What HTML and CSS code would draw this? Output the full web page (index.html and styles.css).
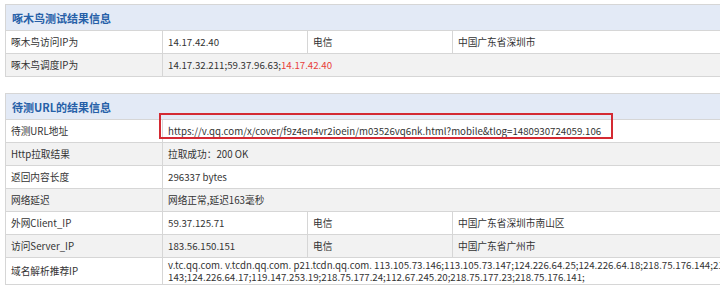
FILE: index.html
```html
<!DOCTYPE html>
<html>
<head>
<meta charset="utf-8">
<link rel="stylesheet" href="styles.css">
</head>
<body>
<div class="page">
  <table class="info">
    <colgroup><col class="c1"><col class="c2"><col class="c3"><col class="c4"></colgroup>
    <tr class="head"><th colspan="4">啄木鸟测试结果信息</th></tr>
    <tr><td>啄木鸟访问IP为</td><td>14.17.42.40</td><td>电信</td><td>中国广东省深圳市</td></tr>
    <tr class="alt"><td>啄木鸟调度IP为</td><td colspan="3">14.17.32.211;59.37.96.63;<span class="red">14.17.42.40</span></td></tr>
  </table>

  <table class="info">
    <colgroup><col class="c1"><col class="c2"><col class="c3"><col class="c4"></colgroup>
    <tr class="head"><th colspan="4">待测URL的结果信息</th></tr>
    <tr><td>待测URL地址</td><td colspan="3"><span class="hl">https://v.qq.com/x/cover/f9z4en4vr2ioein/m03526vq6nk.html?mobile&amp;tlog=1480930724059.106</span></td></tr>
    <tr class="alt"><td>Http拉取结果</td><td colspan="3">拉取成功：200 OK</td></tr>
    <tr><td>返回内容长度</td><td colspan="3">296337 bytes</td></tr>
    <tr class="alt"><td>网络延迟</td><td colspan="3">网络正常,延迟163毫秒</td></tr>
    <tr><td>外网Client_IP</td><td>59.37.125.71</td><td>电信</td><td>中国广东省深圳市南山区</td></tr>
    <tr class="alt"><td>访问Server_IP</td><td>183.56.150.151</td><td>电信</td><td>中国广东省广州市</td></tr>
    <tr class="tall"><td>域名解析推荐IP</td><td colspan="3" class="multi">v.tc.qq.com. v.tcdn.qq.com. p21.tcdn.qq.com. 113.105.73.146;113.105.73.147;124.226.64.25;124.226.64.18;218.75.176.144;218.75.176.<br>143;124.226.64.17;119.147.253.19;218.75.177.24;112.67.245.20;218.75.177.23;218.75.176.141;</td></tr>
  </table>

  <table class="info">
    <colgroup><col class="c1"><col class="c2"><col class="c3"><col class="c4"></colgroup>
    <tr class="head"><th colspan="4">&nbsp;</th></tr>
  </table>
</div>
</body>
</html>
```
FILE: styles.css
```css
html, body {
  margin: 0;
  padding: 0;
  background: #ffffff;
  overflow: hidden;
}
.page {
  padding: 4px 0 0 5px;
  font-family: "Noto Sans CJK SC", "Noto Sans", sans-serif;
  font-size: 9.7px;
  color: #333333;
}
.info {
  width: 780px;
  border-collapse: collapse;
  table-layout: fixed;
  margin-bottom: 16px;
  border: 1px solid #d6d6d6;
}
.c1 { width: 157px; }
.c2 { width: 145px; }
.c3 { width: 145px; }
.info th {
  height: 25px;
  padding: 0 6px;
  text-align: left;
  background: #e3eaf6;
  color: #2660a8;
  font-size: 11px;
  font-weight: bold;
  border: 1px solid #d6d6d6;
}
.info td {
  height: 22px;
  padding: 0 5px;
  border: 1px solid #d6d6d6;
  background: #ffffff;
  white-space: nowrap;
  line-height: 12px;
}
.info tr.alt td { background: #f2f2f2; }
.info tr.tall td { height: 25px; }
.info td.multi { line-height: 11.5px; padding-top: 1px; }
.red { color: #e8403a; }
.hl {
  position: relative;
  display: inline-block;
}
.hl::before {
  content: "";
  position: absolute;
  left: -9px;
  right: -12px;
  top: -12px;
  bottom: -2px;
  border: 2px solid #d42a33;
}
```
